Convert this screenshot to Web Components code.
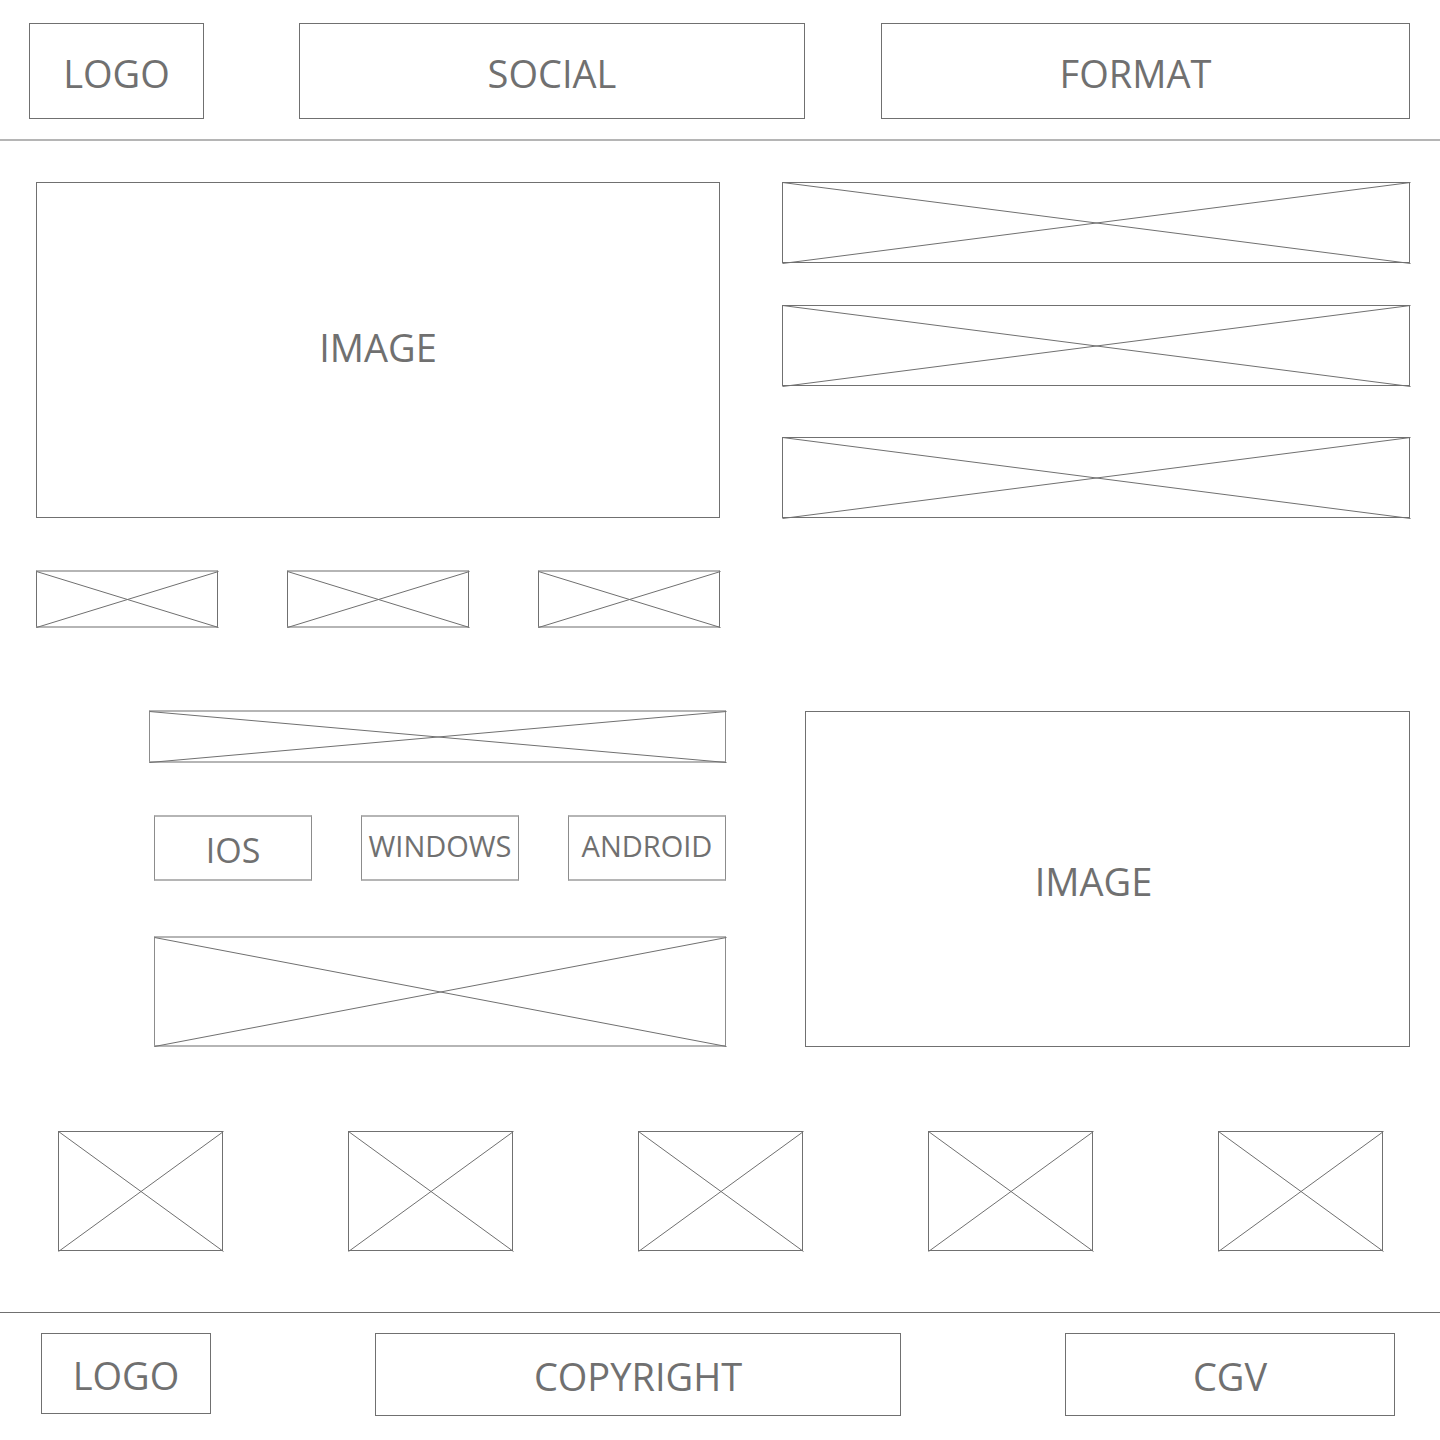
<!DOCTYPE html>
<html lang="en">
<head>
<meta charset="utf-8">
<meta name="viewport" content="width=device-width, initial-scale=1">
<title>Landing page wireframe</title>
<style>
  body {
    margin: 0;
    background: #fff;
    color: #707070;
    font-family: "Open Sans", "Noto Sans", sans-serif;
  }
</style>
</head>
<body>
<wire-page></wire-page>

<template id="wire-box">
  <style>
    :host {
      display: flex;
      align-items: center;
      justify-content: center;
      box-sizing: border-box;
      min-width: 0;
      border: 1px solid #707070;
      font-size: 38px;
      line-height: 48px;
      white-space: nowrap;
    }
    :host([soft]) {
      border-width: 2px 1px;
      border-color: #b5b5b5 #8c8c8c;
    }
  </style>
  <slot></slot>
</template>

<template id="wire-cross">
  <style>
    :host {
      display: grid;
      box-sizing: border-box;
      min-width: 0;
      position: relative;
      border: 1px solid #707070;
    }
    :host([soft]) {
      border-width: 2px 1px;
      border-color: #b5b5b5 #8c8c8c;
    }
    :host([soft="rows"]) { border-color: #b5b5b5 #707070; }
    svg {
      position: absolute;
      top: -1px;
      left: -1px;
      width: calc(100% + 2px);
      height: calc(100% + 2px);
      overflow: visible;
      stroke: #707070;
    }
  </style>
  <svg aria-hidden="true">
    <g transform="translate(.5 .5)">
      <line x1="0" y1="0" x2="100%" y2="100%"/>
      <line x1="0" y1="100%" x2="100%" y2="0"/>
    </g>
  </svg>
</template>

<template id="wire-header">
  <style>
    :host { display: block; }
    header {
      display: grid;
      grid-template-columns: 175fr 95fr 506fr 76fr 529fr;
      padding: 23px 30px 20px 29px;
      border-bottom: 2px solid #b5b5b5;
    }
    wire-box { height: 96px; padding-top: 4px; }
    .social { grid-column: 3; }
    .format { grid-column: 5; padding-right: 20px; }
  </style>
  <header>
    <wire-box>LOGO</wire-box>
    <wire-box class="social">SOCIAL</wire-box>
    <wire-box class="format">FORMAT</wire-box>
  </header>
</template>

<template id="wire-intro">
  <style>
    :host { display: block; }
    section {
      display: grid;
      grid-template-columns: 684fr 628fr;
      column-gap: 62px;
      row-gap: 52px;
      padding: 41px 30px 82px 36px;
    }
    .image { height: 336px; padding-bottom: 6px; }
    .lines { display: flex; flex-direction: column; gap: 42px; }
    .lines wire-cross { height: 81px; }
    .lines wire-cross:last-child { margin-top: auto; }
    .thumbs {
      display: grid;
      grid-template-columns: repeat(3, 1fr);
      gap: 69px;
    }
    .thumbs wire-cross { height: 58px; }
  </style>
  <section>
    <wire-box class="image">IMAGE</wire-box>
    <div class="lines">
      <wire-cross></wire-cross>
      <wire-cross></wire-cross>
      <wire-cross></wire-cross>
    </div>
    <div class="thumbs">
      <wire-cross soft="rows"></wire-cross>
      <wire-cross soft="rows"></wire-cross>
      <wire-cross soft="rows"></wire-cross>
    </div>
  </section>
</template>

<template id="wire-platforms">
  <style>
    :host { display: block; }
    section {
      display: grid;
      grid-template-columns: 577fr 605fr;
      column-gap: 79px;
      padding: 0 30px 0 149px;
    }
    .copy { display: flex; flex-direction: column; gap: 52px; }
    .title { height: 53px; }
    .systems {
      display: grid;
      grid-template-columns: repeat(3, 1fr);
      gap: 49px;
      margin-left: 5px;
    }
    .systems wire-box { height: 66px; font-size: 29px; padding-bottom: 4px; }
    .systems .short { font-size: 34px; padding: 4px 0 0; }
    .text { height: 111px; margin: auto 0 0 5px; }
    .image { height: 336px; margin-top: 1px; padding: 4px 28px 0 0; }
  </style>
  <section>
    <div class="copy">
      <wire-cross soft class="title"></wire-cross>
      <div class="systems">
        <wire-box soft class="short">IOS</wire-box>
        <wire-box soft>WINDOWS</wire-box>
        <wire-box soft>ANDROID</wire-box>
      </div>
      <wire-cross soft class="text"></wire-cross>
    </div>
    <wire-box class="image">IMAGE</wire-box>
  </section>
</template>

<template id="wire-gallery">
  <style>
    :host { display: block; }
    section {
      display: grid;
      grid-template-columns: repeat(5, 1fr);
      gap: 125px;
      padding: 84px 57px 61px 58px;
    }
    wire-cross { height: 120px; }
  </style>
  <section>
    <wire-cross></wire-cross>
    <wire-cross></wire-cross>
    <wire-cross></wire-cross>
    <wire-cross></wire-cross>
    <wire-cross></wire-cross>
  </section>
</template>

<template id="wire-footer">
  <style>
    :host { display: block; }
    footer {
      display: grid;
      grid-template-columns: 170fr 526fr 330fr;
      align-items: start;
      gap: 164px;
      padding: 20px 45px 24px 41px;
      border-top: 1px solid #707070;
    }
    wire-box { height: 83px; padding-top: 2px; }
    .logo { height: 81px; }
  </style>
  <footer>
    <wire-box class="logo">LOGO</wire-box>
    <wire-box>COPYRIGHT</wire-box>
    <wire-box>CGV</wire-box>
  </footer>
</template>

<template id="wire-page">
  <style>
    :host { display: block; }
  </style>
  <wire-header></wire-header>
  <main>
    <wire-intro></wire-intro>
    <wire-platforms></wire-platforms>
    <wire-gallery></wire-gallery>
  </main>
  <wire-footer></wire-footer>
</template>

<script>
  class WireElement extends HTMLElement {
    constructor() {
      super();
      const template = document.getElementById(this.localName);
      this.attachShadow({ mode: "open" }).append(template.content.cloneNode(true));
    }
  }

  customElements.define("wire-box", class WireBox extends WireElement {});
  customElements.define("wire-cross", class WireCross extends WireElement {});
  customElements.define("wire-header", class WireHeader extends WireElement {});
  customElements.define("wire-intro", class WireIntro extends WireElement {});
  customElements.define("wire-platforms", class WirePlatforms extends WireElement {});
  customElements.define("wire-gallery", class WireGallery extends WireElement {});
  customElements.define("wire-footer", class WireFooter extends WireElement {});
  customElements.define("wire-page", class WirePage extends WireElement {});
</script>
</body>
</html>
